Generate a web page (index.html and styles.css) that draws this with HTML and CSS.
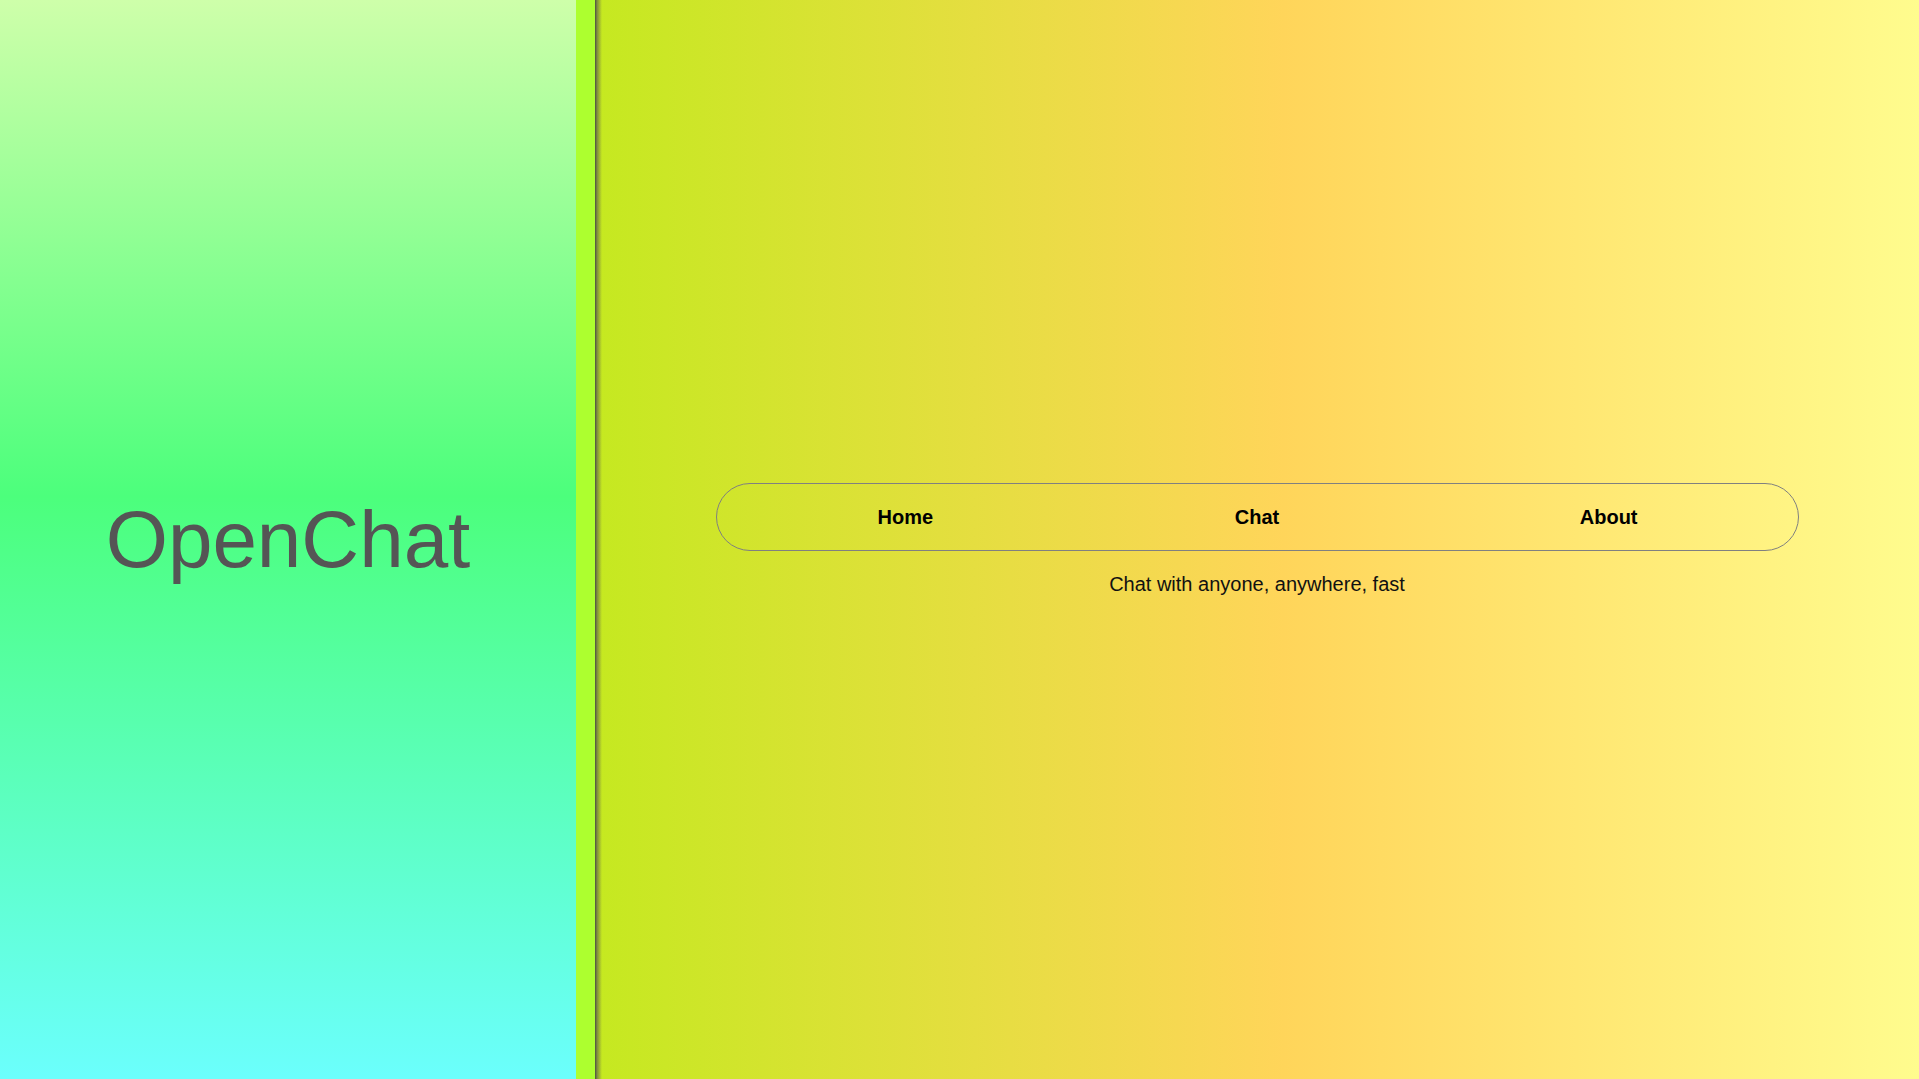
FILE: index.html
```html
<!DOCTYPE html>
<html lang="en">
<head>
<meta charset="utf-8">
<title>OpenChat</title>
<link rel="stylesheet" href="styles.css">
</head>
<body>
<div class="layout">
  <aside class="sidebar">
    <h1 class="brand">OpenChat</h1>
  </aside>
  <div class="divider"></div>
  <main class="main">
    <nav class="nav">
      <a class="nav-item" href="#">Home</a>
      <a class="nav-item" href="#">Chat</a>
      <a class="nav-item" href="#">About</a>
    </nav>
    <p class="tagline">Chat with anyone, anywhere, fast</p>
  </main>
</div>
</body>
</html>
```
FILE: styles.css
```css
html, body {
  margin: 0;
  padding: 0;
  height: 100%;
}
body {
  font-family: "Liberation Sans", Arial, sans-serif;
}
.layout {
  display: flex;
  height: 100vh;
}
.sidebar {
  width: 576px;
  flex: 0 0 576px;
  display: flex;
  align-items: center;
  justify-content: center;
  background: linear-gradient(to bottom, #ceffaa 0%, #4cff7c 46%, #6bfffd 100%);
}
.brand {
  margin: 0;
  font-weight: normal;
  font-size: 80px;
  color: #555555;
}
.divider {
  flex: 0 0 19px;
  background: #adff2f;
}
.main {
  flex: 1;
  display: flex;
  flex-direction: column;
  align-items: center;
  justify-content: center;
  background:
    linear-gradient(to right, rgba(70, 70, 70, 0.95) 0px, rgba(80, 80, 80, 0.6) 2px, rgba(90, 90, 90, 0) 7px),
    linear-gradient(to right, #c5e920 0%, #ffd55a 52%, #fffc8e 100%);
}
.nav {
  box-sizing: border-box;
  width: 1083px;
  height: 68px;
  border: 1px solid #808080;
  border-radius: 34px;
  padding: 0 13px;
  display: grid;
  grid-template-columns: 1fr 1fr 1fr;
  align-items: center;
}
.nav-item {
  text-align: center;
  font-weight: bold;
  font-size: 20px;
  color: #000;
  text-decoration: none;
}
.tagline {
  margin: 22px 0 0 0;
  font-size: 20px;
  color: #111;
}
```
